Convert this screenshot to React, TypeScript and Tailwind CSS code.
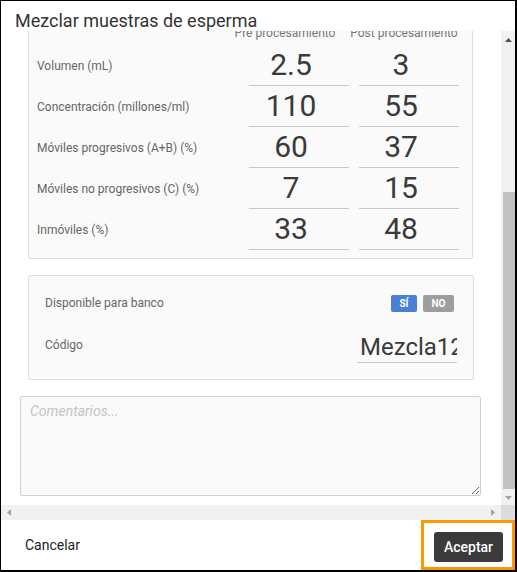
import React from "react";

const rows: [string, string, string][] = [
  ["Volumen (mL)", "2.5", "3"],
  ["Concentración (millones/ml)", "110", "55"],
  ["Móviles progresivos (A+B) (%)", "60", "37"],
  ["Móviles no progresivos (C) (%)", "7", "15"],
  ["Inmóviles (%)", "33", "48"],
];

function Tri({ dir, color }: { dir: "up" | "down" | "left" | "right"; color: string }) {
  const pts: Record<string, string> = {
    up: "0,4 7,4 3.5,0",
    down: "0,0 7,0 3.5,4",
    left: "4,0 4,7 0,3.5",
    right: "0,0 0,7 4,3.5",
  };
  const horiz = dir === "left" || dir === "right";
  return (
    <svg width={horiz ? 4 : 7} height={horiz ? 7 : 4} viewBox={horiz ? "0 0 4 7" : "0 0 7 4"}>
      <polygon points={pts[dir]} fill={color} />
    </svg>
  );
}

export default function App() {
  return (
    <div className="w-[517px] h-[572px] bg-white border-l border-t border-r-2 border-b-2 border-black font-[Roboto,'Liberation_Sans',sans-serif] flex flex-col overflow-hidden">
      {/* title */}
      <div className="h-[30px] pl-[14px] pt-[9px] shrink-0">
        <div className="text-[18px] leading-[22px] text-[#333] whitespace-nowrap">Mezclar muestras de esperma</div>
      </div>

      {/* scroll area */}
      <div className="relative flex flex-col h-[489px] shrink-0 bg-white">
        <div className="flex h-[474px]">
          <div className="w-[500px] h-[474px] overflow-hidden bg-white">
            <div className="mt-[-21px]">
              {/* card 1 */}
              <div className="ml-[27px] w-[445px] bg-[#fafafa] border border-[#dedede] rounded-[2px] pt-[14px] pb-[8px] pl-[8px] pr-[13px]">
                <div className="flex justify-end h-[16px] mb-[4px] gap-[9px] text-[12px] leading-[16px] text-[#757575]">
                  <div className="w-[110px] text-center whitespace-nowrap">Pre procesamiento</div>
                  <div className="w-[110px] text-center whitespace-nowrap">Post procesamiento</div>
                </div>
                {rows.map(([label, a, b]) => (
                  <div key={label} className="flex items-center h-[41px]">
                    <div className="flex-1 text-[12px] text-[#666] whitespace-nowrap">{label}</div>
                    <div className="w-[100px] h-[41px] border-b border-[#c8c8c8] text-center pr-[16px] text-[30px] leading-[40px] text-[#3a3a3a]">{a}</div>
                    <div className="w-[100px] h-[41px] ml-[10px] border-b border-[#c8c8c8] text-center pr-[16px] text-[30px] leading-[40px] text-[#3a3a3a]">{b}</div>
                  </div>
                ))}
              </div>

              {/* card 2 */}
              <div className="ml-[27px] mt-[16px] w-[446px] bg-[#fafafa] border border-[#dedede] rounded-[2px] pt-[12px] pb-[16px] pl-[16px] pr-[16px]">
                <div className="flex items-center h-[30px]">
                  <div className="flex-1 text-[12px] text-[#666]">Disponible para banco</div>
                  <div className="flex gap-[6px] mr-[3px]">
                    <div className="w-[26px] h-[17px] rounded-[2px] bg-[#4a7fd6] text-white text-[10px] font-bold leading-[17px] text-center">SÍ</div>
                    <div className="w-[31px] h-[17px] rounded-[2px] bg-[#9e9e9e] text-white text-[10px] font-bold leading-[17px] text-center">NO</div>
                  </div>
                </div>
                <div className="flex items-center h-[36px] mt-[9px]">
                  <div className="flex-1 text-[12px] text-[#666]">Código</div>
                  <div className="w-[100px] h-[36px] border-b border-[#c8c8c8] overflow-hidden whitespace-nowrap pl-[3px] pt-[3px] text-[24px] leading-[34px] text-[#3a3a3a]">Mezcla12</div>
                </div>
              </div>

              {/* textarea */}
              <div className="ml-[19px] mt-[16px] w-[461px] h-[100px]">
                <textarea
                  readOnly
                  placeholder="Comentarios..."
                  className="block w-[461px] h-[100px] bg-[#fafafa] border border-[#cfcfcf] rounded-[2px] pl-[9px] pt-[5px] text-[14px] leading-[18px] text-[#333] placeholder:italic placeholder:text-[#c4c4c4] outline-none resize"
                />
              </div>
            </div>
          </div>
          {/* vertical scrollbar */}
          <div className="w-[14px] h-[474px] bg-[#f1f1f1] flex flex-col">
            <div className="h-[17px] flex items-center justify-center">
              <Tri dir="up" color="#505050" />
            </div>
            <div className="h-[144px]" />
            <div className="h-[297px] ml-[2px] w-[12px] bg-[#c1c1c1]" />
            <div className="flex-1 flex items-center justify-center pt-[2px]">
              <Tri dir="down" color="#a3a3a3" />
            </div>
          </div>
        </div>
        {/* horizontal scrollbar */}
        <div className="flex h-[15px]">
          <div className="w-[500px] h-[15px] bg-[#f1f1f1] flex items-center justify-between pl-[6px] pr-[6px]">
            <Tri dir="left" color="#a3a3a3" />
            <Tri dir="right" color="#a3a3a3" />
          </div>
          <div className="w-[14px] h-[15px] bg-[#dcdcdc]" />
        </div>
      </div>

      {/* footer */}
      <div className="flex h-[50px] shrink-0 bg-white">
        <div className="flex-1 flex items-center pl-[24px] text-[14px] text-[#222]">Cancelar</div>
        <div className="w-[94px] h-[50px] border-[3px] border-[#ff9800] pt-[9px] pl-[10px]">
          <div className="w-[69px] h-[30px] rounded-[3px] bg-[#3b3b3b] text-white text-[14px] font-medium leading-[30px] text-center">Aceptar</div>
        </div>
      </div>
    </div>
  );
}
